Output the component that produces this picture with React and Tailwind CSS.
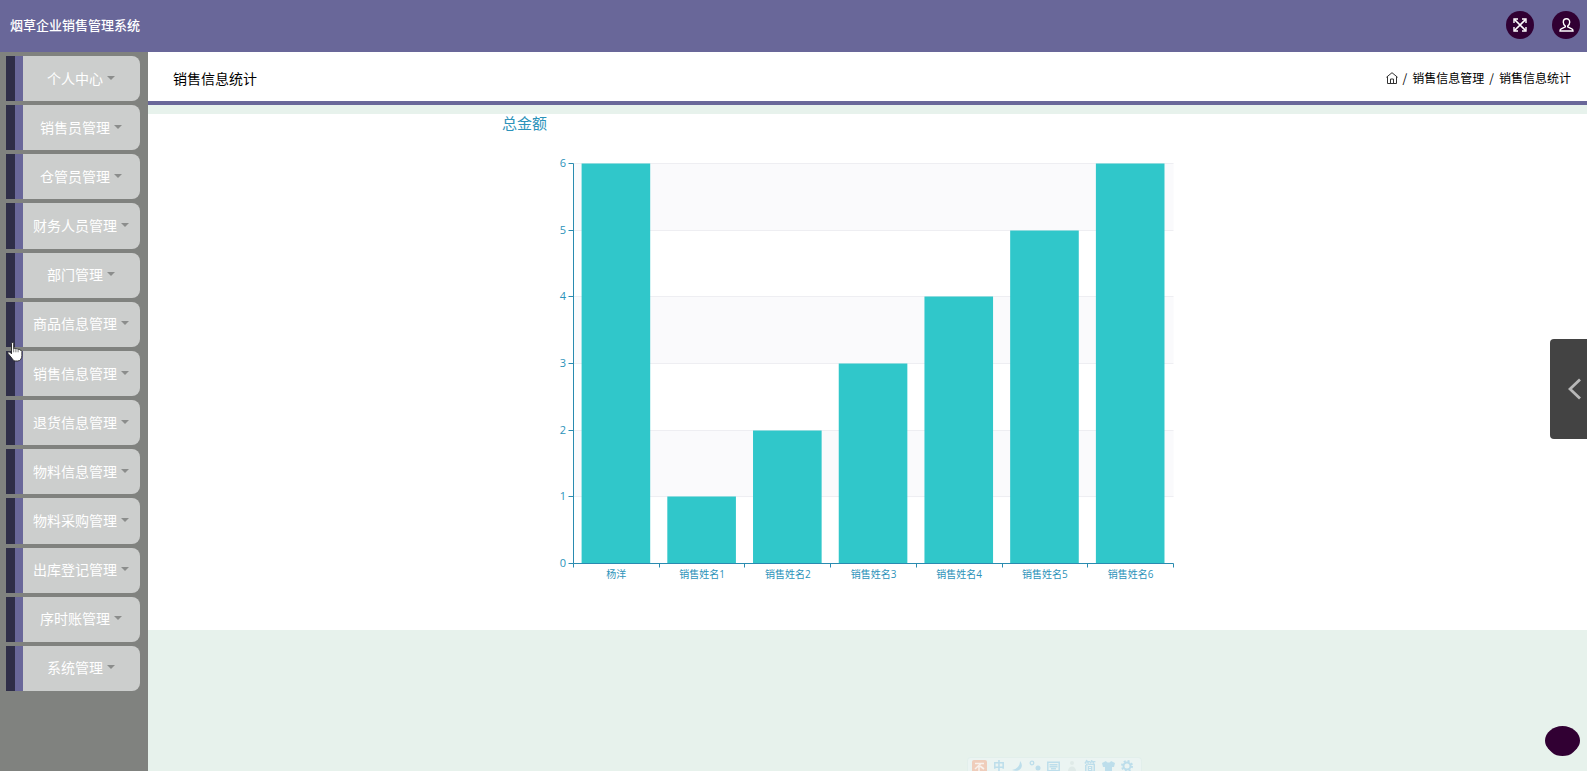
import React from 'react';

const menus = [
  '个人中心',
  '销售员管理',
  '仓管员管理',
  '财务人员管理',
  '部门管理',
  '商品信息管理',
  '销售信息管理',
  '退货信息管理',
  '物料信息管理',
  '物料采购管理',
  '出库登记管理',
  '序时账管理',
  '系统管理',
];

const sales = [
  { name: '杨洋', total: 6 },
  { name: '销售姓名1', total: 1 },
  { name: '销售姓名2', total: 2 },
  { name: '销售姓名3', total: 3 },
  { name: '销售姓名4', total: 4 },
  { name: '销售姓名5', total: 5 },
  { name: '销售姓名6', total: 6 },
];

const Header = () => (
  <header className="flex h-[52px] items-center justify-between bg-[#696799] pb-[2px] pl-[10px] pr-[7px]">
    <h1 className="text-[13px] font-medium text-white">烟草企业销售管理系统</h1>
    <div className="flex gap-[18px]">
      <button aria-label="全屏" className="flex size-7 items-center justify-center rounded-full bg-[#310033]">
        <svg width="14" height="14" viewBox="0 0 14 14" fill="none" stroke="#fff" strokeWidth="1.7">
          <path d="M1.5 1.5l11 11M12.5 1.5l-11 11" />
          <path d="M1 5V1h4M9 1h4v4M13 9v4H9M5 13H1V9" strokeWidth="1.4" />
        </svg>
      </button>
      <button aria-label="用户" className="flex size-7 items-center justify-center rounded-full bg-[#310033]">
        <svg width="15" height="14" viewBox="0 0 15 14" fill="none" stroke="#fff" strokeWidth="1.4">
          <path d="M7.500.8C5.200.8 4.300 2.400 4.300 4.300c0 1.700 1 2.900 2 3.700v.9L2.200 10.800c-.8.400-1.200 1.100-1.200 2.200h13c0-1.100-.4-1.800-1.200-2.200L8.700 8.900V8c1-.8 2-2 2-3.700C10.700 2.400 9.800.8 7.500.8z" />
        </svg>
      </button>
    </div>
  </header>
);

const Sidebar = () => (
  <aside className="w-[148px] shrink-0 bg-[#80827f] pb-4 pl-[6px] pr-2 pt-1">
    <nav className="flex min-h-[635px] flex-col gap-1">
      {menus.map((name) => (
        <button
          key={name}
          className="flex flex-1 overflow-hidden rounded-r-lg bg-[#cccecd] text-sm text-white"
        >
          <span className="w-[9px] self-stretch bg-[#2f2e48]" />
          <span className="w-2 self-stretch bg-[#696799]" />
          <span className="flex flex-1 items-center justify-center gap-1 self-stretch whitespace-nowrap pb-[2px] pr-px">
            {name}
            <svg width="8" height="4" viewBox="0 0 8 4">
              <path d="M0 0h8L4 4z" fill="#8b8d8c" />
            </svg>
          </span>
        </button>
      ))}
    </nav>
  </aside>
);

const Breadcrumb = () => (
  <div className="flex h-[53px] items-center justify-between border-b-4 border-[#696799] bg-white pl-[25px] pr-4 pt-[2px]">
    <h2 className="text-sm text-black">销售信息统计</h2>
    <nav className="flex items-center gap-[5px] text-xs text-black">
      <a href="#home" aria-label="首页">
        <svg width="12" height="12" viewBox="0 0 12 12" fill="none" stroke="#333" strokeWidth="1">
          <path d="M.4 5.300L6 .7l5.600 4.600M1.500 4.500v7h9v-7M4.500 11.500V7h3v4.500" />
        </svg>
      </a>
      <span>/</span>
      <a href="#sales">销售信息管理</a>
      <span>/</span>
      <a href="#stat">销售信息统计</a>
    </nav>
  </div>
);

const LEFT = 75.5;
const TOP = 49.5;
const BOTTOM = 449.5;
const STEP = 400 / 6;
const BAND = 600 / 7;

// keep lines on half pixels so they stay sharp
const crisp = (n) => Math.floor(n) + 0.5;
const valueY = (v) => crisp(BOTTOM - v * STEP);

const SalesChart = () => (
  <svg
    viewBox="0 0 739 516"
    className="w-[739px] max-w-full font-['Open_Sans','Noto_Sans_CJK_SC',sans-serif]"
  >
    <text x="4" y="15" fontSize="15" fill="#2d93ba">总金额</text>

    {[1, 3, 5].map((v) => (
      <rect key={v} x={LEFT} y={valueY(v + 1)} width="600" height={STEP} fill="#fafafc" />
    ))}
    {[1, 2, 3, 4, 5, 6].map((v) => (
      <path key={v} d={`M${LEFT} ${valueY(v)}h600`} stroke="#eeeef2" />
    ))}

    {sales.map((s, i) => (
      <rect
        key={s.name}
        x={LEFT + BAND * i + 8.1}
        y={valueY(s.total)}
        width="68.6"
        height={BOTTOM - valueY(s.total)}
        fill="#30c7ca"
      />
    ))}

    <g stroke="#2a8bb0" fill="none">
      <path d={`M${LEFT} ${TOP}V${BOTTOM}H${LEFT + 600}`} />
      {[0, 1, 2, 3, 4, 5, 6].map((v) => (
        <path key={v} d={`M${LEFT} ${valueY(v)}h-5`} />
      ))}
      {[0, 1, 2, 3, 4, 5, 6, 7].map((i) => (
        <path key={i} d={`M${crisp(LEFT + BAND * i)} ${BOTTOM}v4`} />
      ))}
    </g>

    <g fill="#2d93ba" fontSize="10">
      {[0, 1, 2, 3, 4, 5, 6].map((v) => (
        <text key={v} x="68" y={valueY(v) + 3} fontSize="11" textAnchor="end">{v}</text>
      ))}
      {sales.map((s, i) => (
        <text key={s.name} x={LEFT + BAND * (i + 0.5)} y="464" textAnchor="middle">{s.name}</text>
      ))}
    </g>
  </svg>
);

const InputBar = () => (
  <div className="fixed bottom-0 left-[967px] flex h-[14px] w-[175px] items-start gap-[6px] rounded-t border border-b-0 border-[#e2efeb] bg-[#ebf4f2] pl-1 pt-[2px] text-xs font-bold leading-3 text-[#bddeeb]">
    <svg width="15" height="14" viewBox="0 0 15 14" className="shrink-0">
      <rect width="15" height="14" rx="2" fill="#efcdbb" />
      <path d="M3 3.500h9M9 3.500L3 9M7 6v6M8 6l4 3" stroke="#f8f1ec" strokeWidth="1.600" fill="none" />
    </svg>
    <span>中</span>
    <svg width="12" height="12" viewBox="0 0 12 12" className="shrink-0" fill="currentColor">
      <path d="M9 1c5 6-1 12-8 9 5-1 8-4 8-9z" />
    </svg>
    <svg width="12" height="12" viewBox="0 0 12 12" className="shrink-0" fill="currentColor">
      <circle cx="3" cy="3" r="1.800" fill="none" stroke="currentColor" strokeWidth="1.300" />
      <circle cx="9" cy="8" r="2.500" />
    </svg>
    <svg width="13" height="12" viewBox="0 0 13 12" className="shrink-0" fill="none" stroke="currentColor" strokeWidth="1.500">
      <path d="M.8 2.200h11.400v8.500H.8zM2.500 4.700h8M2.500 6.700h8M4 8.700h5" />
    </svg>
    <svg width="12" height="12" viewBox="0 0 10 12" className="shrink-0" fill="#dfeae8">
      <circle cx="5" cy="3" r="2" />
      <path d="M1 11c0-6 8-6 8 0z" />
    </svg>
    <span>简</span>
    <svg width="13" height="12" viewBox="0 0 13 12" className="shrink-0" fill="currentColor">
      <path d="M4 1c1 2 4 2 5 0l4 2-1 4h-2v5H3V7H1L0 3z" />
    </svg>
    <svg width="12" height="12" viewBox="0 0 12 12" className="shrink-0" fill="none" stroke="currentColor">
      <circle cx="6" cy="6" r="3.500" strokeWidth="2" />
      <circle cx="6" cy="6" r="5" strokeWidth="2" strokeDasharray="2 1.930" />
    </svg>
  </div>
);

const App = () => {
  return (
    <div className="flex min-h-screen flex-col bg-[#e7f2ec] font-['Noto_Sans_CJK_SC',sans-serif]">
      <Header />
      <div className="flex flex-1">
        <Sidebar />
        <main className="min-w-0 flex-1">
          <Breadcrumb />
          <section className="mt-[9px] flex justify-center bg-white">
            <SalesChart />
          </section>
        </main>
      </div>

      <button
        aria-label="展开"
        className="fixed right-0 top-[339px] flex h-[100px] w-[37px] items-center justify-end rounded-l bg-[#434343] pr-[6px]"
      >
        <svg width="13" height="22" viewBox="0 0 13 22" fill="none" stroke="#b8b8b8" strokeWidth="2.800">
          <path d="M12 1.500L2 11l10 9.500" />
        </svg>
      </button>

      <button aria-label="客服" className="fixed bottom-[15px] right-[7px]">
        <svg width="35" height="30" viewBox="0 0 35 30">
          <path d="M17.500 0C27 0 35 7 35 14.500c0 5-3 8-6.500 11.500-3 3-7 4-11 4s-8-1-11-4C3 22.500 0 19.500 0 14.500 0 7 8 0 17.500 0z" fill="#310033" />
        </svg>
      </button>

      <InputBar />

      <svg
        width="16"
        height="20"
        viewBox="0 0 16 20"
        className="pointer-events-none fixed left-[7px] top-[342px]"
      >
        <path
          d="M4.500 1.500c0-1.300 2.200-1.300 2.200 0v5.300c.3-.9 2-.8 2.200.3.400-.8 2-.6 2.200.5.500-.7 2-.3 2.200.8.500-.5 1.600-.1 1.600 1v4c0 2.800-1.300 5.600-4.400 5.600H8.600c-1.900 0-2.800-1.300-3.700-2.800L1 11.400c-.7-1.200.8-2.200 1.900-1.200l1.600 1.600z"
          fill="#fff"
          stroke="#222"
          strokeWidth=".9"
        />
        <path d="M6.700 6.800v3.500M8.900 7.200v3.100M11.100 7.800v2.500" stroke="#444" strokeWidth=".7" />
      </svg>
    </div>
  );
};

export default App;
